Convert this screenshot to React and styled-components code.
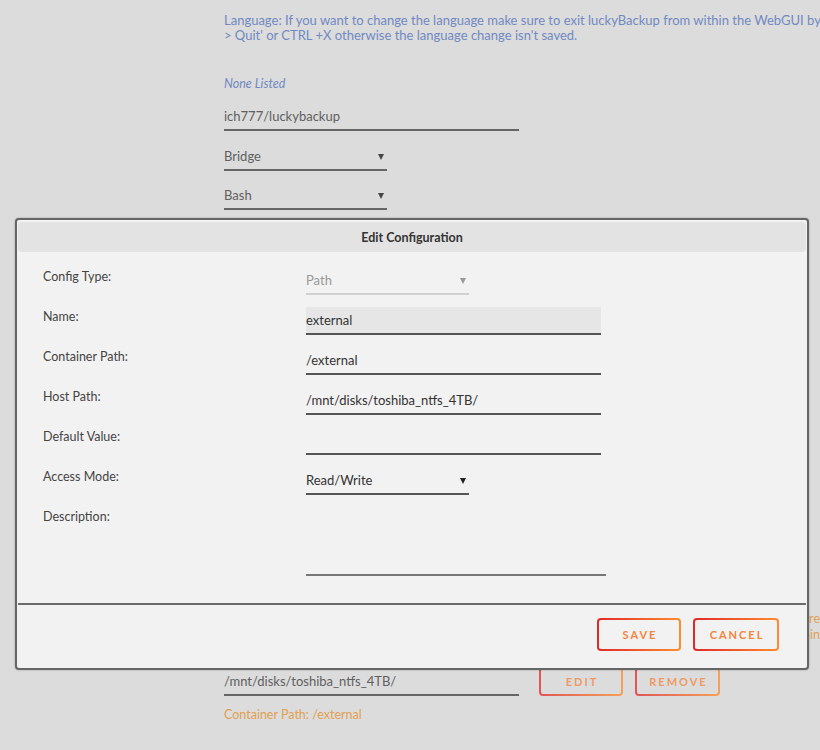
import React from "react";
import styled, { createGlobalStyle, css } from "styled-components";

const Global = createGlobalStyle`
  html, body { margin: 0; padding: 0; background: #dcdcdc; overflow: hidden; }
  body { font-family: Lato, "Open Sans", "Liberation Sans", sans-serif; width: 820px; height: 750px; position: relative; }
`;

const Page = styled.div`
  padding: 13px 0 0 224px;
  width: 596px;
  height: 710px;
  display: flex;
  flex-direction: column;
`;

const Blurb = styled.div`
  color: #7189c2;
  font-size: 13px;
  line-height: 14.5px;
  white-space: nowrap;
`;

const Italic = styled.div`
  color: #7189c2;
  font-style: italic;
  font-size: 12.5px;
  line-height: 18px;
  margin-top: 33px;
`;

const BgField = styled.div`
  width: ${(p) => p.$w}px;
  height: 28px;
  box-sizing: border-box;
  border-bottom: 2px solid #666;
  display: flex;
  align-items: center;
  justify-content: space-between;
  color: #606060;
  font-size: 13px;
  margin-top: ${(p) => p.$mt || 0}px;
  flex-shrink: 0;
`;

const Arrow = ({ color = "#444" }) => (
  <svg width="6" height="7" viewBox="0 0 6 7" style={{ marginRight: 3 }}>
    <path d="M0 1 H6 L3 7 Z" fill={color} />
  </svg>
);

const Spacer = styled.div`
  flex: 1;
`;

const Notes = styled.div`
  color: #e0a050;
  font-size: 12.5px;
  line-height: 16px;
  white-space: nowrap;
  text-align: right;
  width: 596px;
`;

const BgRow = styled.div`
  display: flex;
  align-items: flex-end;
  margin-top: 24px;
`;

const btnBase = css`
  box-sizing: border-box;
  height: ${(p) => p.$h || 33}px;
  width: ${(p) => p.$w}px;
  border: 2px solid transparent;
  border-radius: 4px;
  background:
    linear-gradient(${(p) => p.$bg}, ${(p) => p.$bg}) padding-box,
    linear-gradient(90deg, #e22828, #ff8c2f) border-box;
  font-family: Lato, "Open Sans", sans-serif;
  font-weight: 700;
  font-size: 11px;
  letter-spacing: 2px;
  text-transform: uppercase;
  color: #f5843c;
  display: flex;
  align-items: center;
  justify-content: center;
  padding: 0 0 0 2px;
  cursor: pointer;
`;

const Button = styled.button`
  ${btnBase}
`;

const BgButton = styled.button`
  ${btnBase}
  opacity: 0.75;
  margin-left: ${(p) => p.$ml}px;
`;

const OrangeText = styled.div`
  color: #e0a050;
  font-size: 12.5px;
  line-height: 16px;
  margin-top: 11px;
`;

const Modal = styled.div`
  position: absolute;
  left: 15px;
  top: 218px;
  width: 794px;
  height: 452px;
  box-sizing: border-box;
  background: #f2f2f2;
  border: 2px solid #666;
  border-radius: 4px;
  box-shadow: 0 0 2px rgba(0, 0, 0, 0.3);
  padding: 2px 1px 0;
  display: flex;
  flex-direction: column;
`;

const Header = styled.div`
  height: 30px;
  background: #e3e3e3;
  border-radius: 4px;
  display: flex;
  align-items: center;
  justify-content: center;
  font-weight: 700;
  font-size: 12.5px;
  color: #333;
`;

const Form = styled.div`
  padding: 15px 0 0 25px;
  display: flex;
  flex-direction: column;
  gap: 12px;
`;

const Row = styled.div`
  display: grid;
  grid-template-columns: 263px auto;
  align-items: start;
`;

const Label = styled.div`
  font-size: 12.5px;
  line-height: 18px;
  padding-top: 1px;
  color: #444;
`;

const Field = styled.div`
  box-sizing: border-box;
  width: ${(p) => p.$w}px;
  height: ${(p) => p.$h || 28}px;
  background: ${(p) => (p.$filled ? "#e6e6e6" : "transparent")};
  border-bottom: 2px solid ${(p) => p.$line || "#555"};
  display: flex;
  align-items: center;
  justify-content: space-between;
  font-size: 13px;
  color: ${(p) => p.$color || "#333"};
`;

const Divider = styled.div`
  height: 2px;
  background: #6b6b6b;
  margin-top: 27px;
`;

const Footer = styled.div`
  display: flex;
  justify-content: flex-end;
  gap: 12px;
  padding: 13px 27px 0 0;
`;

const rows = [
  { label: "Config Type:", value: "Path", w: 163, select: true, disabled: true },
  { label: "Name:", value: "external", w: 295, filled: true },
  { label: "Container Path:", value: "/external", w: 295 },
  { label: "Host Path:", value: "/mnt/disks/toshiba_ntfs_4TB/", w: 295 },
  { label: "Default Value:", value: "", w: 295 },
  { label: "Access Mode:", value: "Read/Write", w: 163, select: true },
];

export default function App() {
  return (
    <>
      <Global />
      <Page>
        <Blurb>
          Language: If you want to change the language make sure to exit luckyBackup from within the WebGUI by clicking 'File
          <br />
          &gt; Quit' or CTRL +X otherwise the language change isn't saved.
        </Blurb>
        <Italic>None Listed</Italic>
        <BgField $w={295} $mt={10}>ich777/luckybackup</BgField>
        <BgField $w={163} $mt={12}>
          Bridge <Arrow />
        </BgField>
        <BgField $w={163} $mt={11}>
          Bash <Arrow />
        </BgField>
        <Spacer />
        <Notes>
          Path to the folder you want to back up, files are
          <br />
          also stored here so you can use it again
        </Notes>
        <BgRow>
          <BgField $w={295}>/mnt/disks/toshiba_ntfs_4TB/</BgField>
          <BgButton $w={84} $h={29} $bg="#dcdcdc" $ml={20}>Edit</BgButton>
          <BgButton $w={85} $h={29} $bg="#dcdcdc" $ml={12}>Remove</BgButton>
        </BgRow>
        <OrangeText>Container Path: /external</OrangeText>
      </Page>

      <Modal>
        <Header>Edit Configuration</Header>
        <Form>
          {rows.map((r) => (
            <Row key={r.label}>
              <Label>{r.label}</Label>
              <Field
                $w={r.w}
                $filled={r.filled}
                $line={r.disabled ? "#d0d0d0" : "#555"}
                $color={r.disabled ? "#999" : "#333"}
              >
                {r.value}
                {r.select && <Arrow color={r.disabled ? "#999" : "#222"} />}
              </Field>
            </Row>
          ))}
          <Row>
            <Label>Description:</Label>
            <Field $w={300} $h={69} $line="#777" />
          </Row>
        </Form>
        <Divider />
        <Footer>
          <Button $w={84} $bg="#f2f2f2">Save</Button>
          <Button $w={86} $bg="#f2f2f2">Cancel</Button>
        </Footer>
      </Modal>
    </>
  );
}
